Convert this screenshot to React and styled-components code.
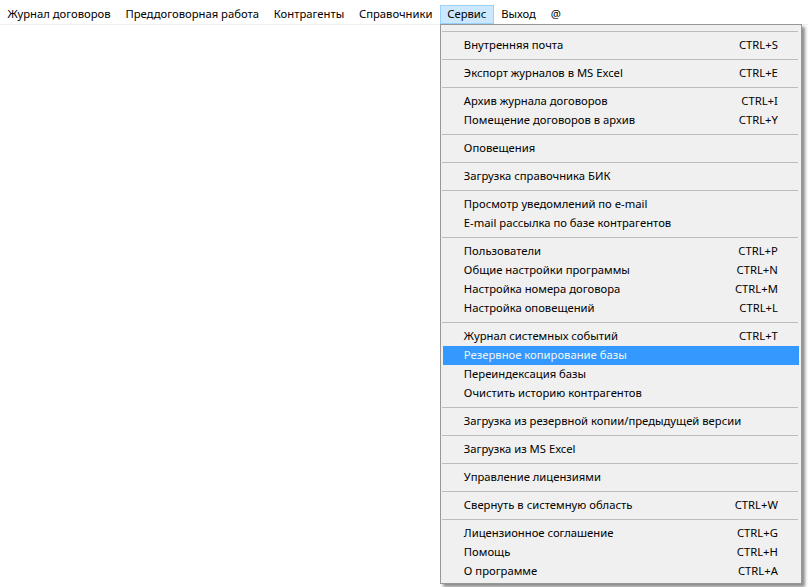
import styled, { createGlobalStyle } from 'styled-components';

const GlobalStyle = createGlobalStyle`
  html, body {
    margin: 0;
    padding: 0;
    background: #ffffff;
  }
  body {
    font-family: "Noto Sans", "Liberation Sans", sans-serif;
    font-size: 11.25px;
    color: #000;
  }
`;

const Page = styled.div`
  width: 808px;
  height: 587px;
  padding-top: 5px;
  box-sizing: border-box;
  overflow: hidden;
`;

const MenuBar = styled.nav`
  display: flex;
  height: 19px;
  border-bottom: 1px solid #f0f0f0;
  background: #fff;
`;

const BarItemWrap = styled.div`
  position: relative;
`;

const BarItem = styled.div`
  height: 19px;
  box-sizing: border-box;
  padding: 0 6.4px 2px;
  display: flex;
  align-items: center;
  white-space: nowrap;
  border: 1px solid ${(p) => (p.$open ? '#99d1ff' : 'transparent')};
  background: ${(p) => (p.$open ? '#cce8ff' : 'transparent')};
`;

const Dropdown = styled.div`
  position: absolute;
  top: 19px;
  left: 0;
  width: 362px;
  box-sizing: border-box;
  padding: 2px;
  background: #f0f0f0;
  border: 1px solid #979797;
  box-shadow: 3px 3px 3px rgba(0, 0, 0, 0.45);
  z-index: 10;
`;

const Row = styled.div`
  height: 19px;
  box-sizing: border-box;
  display: flex;
  align-items: center;
  justify-content: space-between;
  padding: 0 21px 2px;
  white-space: nowrap;
  background: ${(p) => (p.$active ? '#3399ff' : 'transparent')};
  color: ${(p) => (p.$active ? '#f4f4f4' : '#000')};
`;

const Separator = styled.div`
  height: 9px;
  display: flex;
  align-items: center;

  &::before {
    content: '';
    display: block;
    width: 100%;
    height: 1px;
    margin: 0 -1px;
    background: #bcbcbc;
  }
`;

const menuGroups = [
  [['Внутренняя почта', 'CTRL+S']],
  [['Экспорт журналов в MS Excel', 'CTRL+E']],
  [
    ['Архив журнала договоров', 'CTRL+I'],
    ['Помещение договоров в архив', 'CTRL+Y'],
  ],
  [['Оповещения', '']],
  [['Загрузка справочника БИК', '']],
  [
    ['Просмотр уведомлений по e-mail', ''],
    ['E-mail рассылка по базе контрагентов', ''],
  ],
  [
    ['Пользователи', 'CTRL+P'],
    ['Общие настройки программы', 'CTRL+N'],
    ['Настройка номера договора', 'CTRL+M'],
    ['Настройка оповещений', 'CTRL+L'],
  ],
  [
    ['Журнал системных событий', 'CTRL+T'],
    ['Резервное копирование базы', '', true],
    ['Переиндексация базы', ''],
    ['Очистить историю контрагентов', ''],
  ],
  [['Загрузка из резервной копии/предыдущей версии', '']],
  [['Загрузка из MS Excel', '']],
  [['Управление лицензиями', '']],
  [['Свернуть в системную область', 'CTRL+W']],
  [
    ['Лицензионное соглашение', 'CTRL+G'],
    ['Помощь', 'CTRL+H'],
    ['О программе', 'CTRL+A'],
  ],
];

const barItems = [
  'Журнал договоров',
  'Преддоговорная работа',
  'Контрагенты',
  'Справочники',
  'Сервис',
  'Выход',
  '@',
];

const ServiceMenu = () => (
  <Dropdown>
    {menuGroups.map((group, gi) => (
      <div key={gi}>
        <Separator />
        {group.map(([label, shortcut, active]) => (
          <Row key={label} $active={active}>
            <span>{label}</span>
            <span>{shortcut}</span>
          </Row>
        ))}
      </div>
    ))}
  </Dropdown>
);

const App = () => (
  <Page>
    <GlobalStyle />
    <MenuBar>
      {barItems.map((item) => (
        <BarItemWrap key={item}>
          <BarItem $open={item === 'Сервис'}>{item}</BarItem>
          {item === 'Сервис' && <ServiceMenu />}
        </BarItemWrap>
      ))}
    </MenuBar>
  </Page>
);

export default App;
